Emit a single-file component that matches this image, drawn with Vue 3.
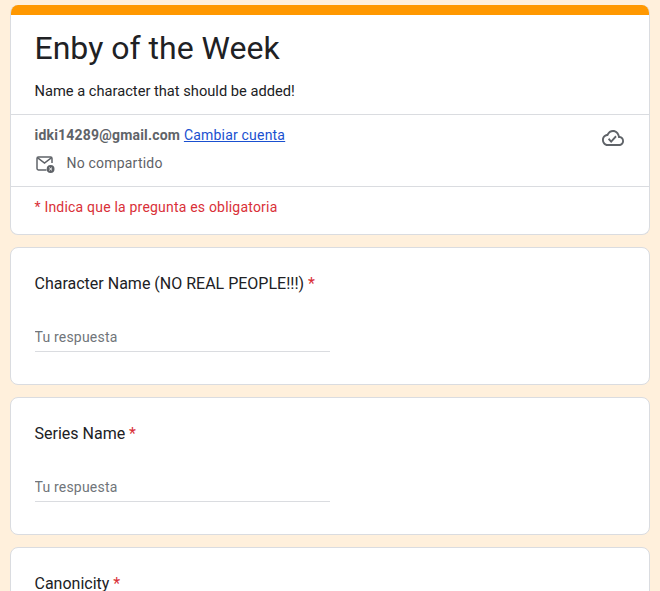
<script setup>
const questions = [
  { id: 'character', label: 'Character Name (NO REAL PEOPLE!!!)', input: true },
  { id: 'series', label: 'Series Name', input: true },
  { id: 'canon', label: 'Canonicity', input: false }
]
</script>

<template>
  <div class="page">
    <form class="form" @submit.prevent>
      <header class="card head">
        <div class="band"></div>
        <div class="intro">
          <h1 class="title">Enby of the Week</h1>
          <p class="desc">Name a character that should be added!</p>
        </div>
        <div class="account">
          <div class="account-info">
            <div class="mail-row">
              <b class="mail">idki14289@gmail.com</b>
              {{ ' ' }}
              <a class="switch" href="#">Cambiar cuenta</a>
            </div>
            <div class="share-row">
              <svg class="mail-icon" width="20" height="20" viewBox="0 0 20 20">
                <path d="M17 10V5.400A1.400 1.400 0 0 0 15.600 4H3.400A1.400 1.400 0 0 0 2 5.400v10.200A1.400 1.400 0 0 0 3.400 17h8.100" fill="none" stroke="#5f6368" stroke-width="1.500"/>
                <path d="M2.400 4.700l7.100 5.300 7.100-5.300" fill="none" stroke="#5f6368" stroke-width="1.500"/>
                <circle cx="15.600" cy="16" r="3.900" fill="#5f6368"/>
                <path d="M14.200 14.600l2.800 2.800M17 14.600l-2.800 2.800" stroke="#fff" stroke-width="1"/>
              </svg>
              <span class="share">No compartido</span>
            </div>
          </div>
          <svg class="cloud" width="22" height="24" viewBox="0 0 24 24" preserveAspectRatio="none">
            <path fill="#5f6368" d="M19.350 10.040C18.670 6.590 15.640 4 12 4 9.110 4 6.600 5.640 5.350 8.040 2.340 8.360 0 10.910 0 14c0 3.310 2.690 6 6 6h13c2.760 0 5-2.240 5-5 0-2.640-2.050-4.780-4.650-4.960zM19 18H6c-2.210 0-4-1.790-4-4 0-2.050 1.530-3.760 3.560-3.970l1.070-.11.500-.95C8.080 7.140 9.940 6 12 6c2.620 0 4.880 1.860 5.390 4.430l.300 1.500 1.530.110c1.560.100 2.780 1.410 2.780 2.960 0 1.650-1.350 3-3 3zm-9-3.820l-2.090-2.090L6.500 13.500 10 17l6.010-6.010-1.410-1.410z"/>
          </svg>
        </div>
        <div class="required-note">* Indica que la pregunta es obligatoria</div>
      </header>

      <section v-for="q in questions" :key="q.id" class="card question">
        <div class="label">{{ q.label }} <span class="star">*</span></div>
        <input v-if="q.input" class="answer" type="text" placeholder="Tu respuesta">
      </section>
    </form>
  </div>
</template>

<style>
html,
body {
  background: #fff0dc;
}
</style>

<style scoped>
.page {
  height: 591px;
  overflow: hidden;
  background: #fff0dc;
  font-family: Roboto, "Liberation Sans", sans-serif;
  color: #202124;
}

.form {
  display: flex;
  flex-direction: column;
  gap: 12px;
  padding: 5px 10px 0;
}

.card {
  background: #fff;
  border: 1px solid #dadce0;
  border-radius: 8px;
  box-sizing: border-box;
}

.head {
  height: 230px;
  border-top: 0;
  overflow: hidden;
}

.band {
  height: 10px;
  background: #ff9800;
  margin: 0 -1px;
}

.intro {
  height: 100px;
  box-sizing: border-box;
  padding: 13px 23.500px 0;
  border-bottom: 1px solid #dadce0;
}

.title {
  margin: 0;
  font-size: 32px;
  font-weight: 400;
  line-height: 40px;
}

.desc {
  margin: 13px 0 0;
  font-size: 14.670px;
  line-height: 20px;
}

.account {
  display: flex;
  justify-content: space-between;
  height: 72px;
  box-sizing: border-box;
  padding: 10px 24px 0 23.500px;
  border-bottom: 1px solid #dadce0;
}

.mail-row {
  font-size: 14px;
  line-height: 20px;
  letter-spacing: 0.200px;
}

.mail {
  font-weight: 700;
  color: #5f6368;
}

.switch {
  color: #1a50d0;
}

.share-row {
  display: flex;
  align-items: center;
  gap: 12px;
  margin-top: 8px;
  height: 20px;
}

.share {
  font-size: 14px;
  letter-spacing: 0.200px;
  color: #5f6368;
}

.cloud {
  margin: 1px 1px 0 0;
}

.required-note {
  padding: 10px 23.500px 0;
  font-size: 14px;
  line-height: 20px;
  letter-spacing: 0.200px;
  color: #d93038;
}

.question {
  height: 138px;
  padding: 24px 24px 0 23.500px;
}

.label {
  font-size: 16px;
  line-height: 24px;
}

.star {
  color: #d93038;
}

.answer {
  display: block;
  width: 295px;
  height: 33px;
  margin-top: 23px;
  padding: 3px 0 0;
  box-sizing: border-box;
  border: 0;
  border-bottom: 1px solid #dadce0;
  outline: none;
  background: transparent;
  font-family: inherit;
  font-size: 14px;
  letter-spacing: 0.200px;
}

.answer::placeholder {
  color: #70757a;
  opacity: 1;
}
</style>
